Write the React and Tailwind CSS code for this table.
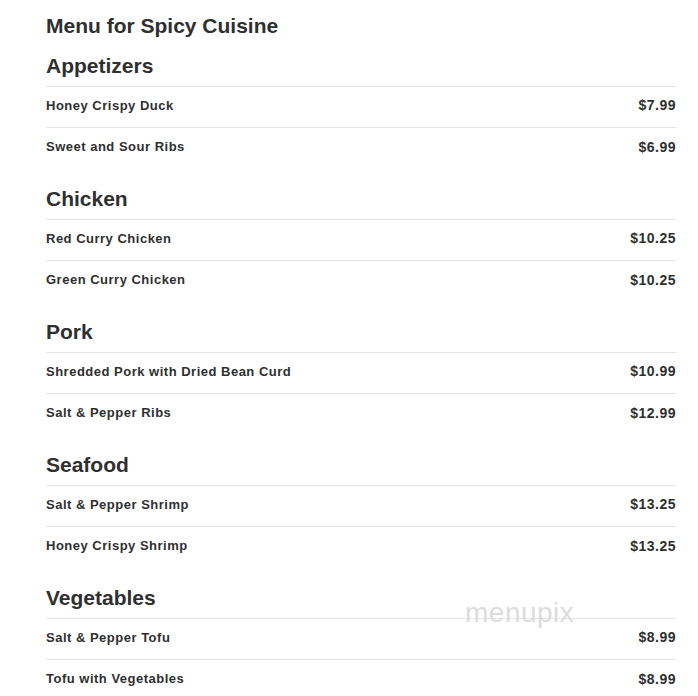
import React from "react";

const sections = [
  {
    title: "Appetizers",
    items: [
      ["Honey Crispy Duck", "$7.99"],
      ["Sweet and Sour Ribs", "$6.99"],
    ],
  },
  {
    title: "Chicken",
    items: [
      ["Red Curry Chicken", "$10.25"],
      ["Green Curry Chicken", "$10.25"],
    ],
  },
  {
    title: "Pork",
    items: [
      ["Shredded Pork with Dried Bean Curd", "$10.99"],
      ["Salt & Pepper Ribs", "$12.99"],
    ],
  },
  {
    title: "Seafood",
    items: [
      ["Salt & Pepper Shrimp", "$13.25"],
      ["Honey Crispy Shrimp", "$13.25"],
    ],
  },
  {
    title: "Vegetables",
    items: [
      ["Salt & Pepper Tofu", "$8.99"],
      ["Tofu with Vegetables", "$8.99"],
    ],
  },
];

export default function App() {
  return (
    <div
      className="relative min-h-screen bg-white text-[#2f2f2f] pl-[46px] pr-[22px] pt-[12px] overflow-hidden"
      style={{ fontFamily: '"Liberation Sans", Arial, sans-serif' }}
    >
      <h1 className="text-[21px] font-bold leading-[28px] mb-[12px]">
        Menu for Spicy Cuisine
      </h1>

      {sections.map((s) => (
        <div key={s.title} className="mb-[16px]">
          <h2 className="text-[21px] font-bold leading-[28px] pb-[6px] border-b border-[#e5e5e5]">
            {s.title}
          </h2>
          {s.items.map(([name, price], i) => (
            <div
              key={name}
              className={
                "flex justify-between items-center h-[41px] pb-[3px] " +
                (i === 0 ? "border-b border-[#e5e5e5]" : "")
              }
            >
              <span className="text-[13px] font-bold tracking-[0.5px]">{name}</span>
              <span className="text-[14px] font-bold tracking-[0.5px]">{price}</span>
            </div>
          ))}
        </div>
      ))}

      {/* watermark */}
      <div className="absolute left-[465px] top-[592px] text-[28px] font-light text-[#dcdcdc] tracking-[0.5px] pointer-events-none">
        menupix
      </div>
    </div>
  );
}
